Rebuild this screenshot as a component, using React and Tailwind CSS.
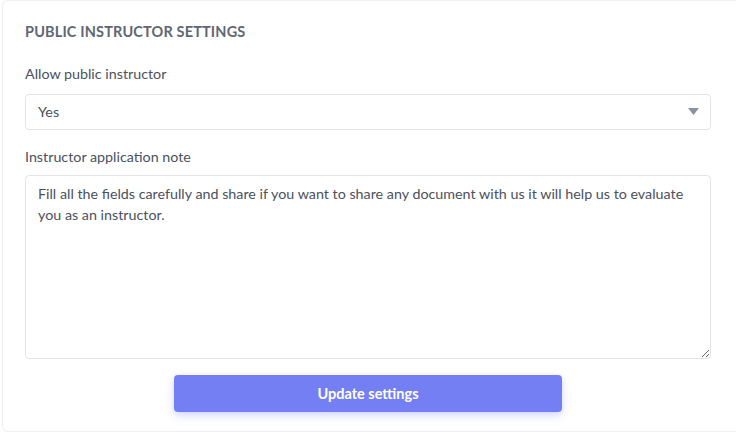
export default function App() {
  return (
    <div
      className="h-[437px] overflow-hidden bg-white pl-[2px] pb-[5px] text-[#4a5160]"
      style={{ fontFamily: 'Lato, "Open Sans", sans-serif' }}
    >
      <div className="h-full rounded-l-md border border-r-0 border-[#efeff1] bg-white pl-[22px] pr-[25px] pt-[22px] pb-6">
        {/* HEADER */}
        <h2 className="text-[14.5px] font-bold tracking-[0.15px] text-[#5f6673] leading-[18px]">
          PUBLIC INSTRUCTOR SETTINGS
        </h2>

        {/* ALLOW PUBLIC INSTRUCTOR */}
        <label className="mt-[24px] block text-[14.3px] leading-[18px] text-[#4a5160]">
          Allow public instructor
        </label>
        <div className="relative mt-[11px]">
          <select className="h-[36px] w-full appearance-none rounded border border-[#e3e4e6] bg-white px-3 text-[14.3px] text-[#4a5160] outline-none">
            <option>Yes</option>
            <option>No</option>
          </select>
          <svg
            className="pointer-events-none absolute right-[12px] top-[14px]"
            width="11"
            height="7"
            viewBox="0 0 11 7"
          >
            <path d="M0 0h11L5.5 7z" fill="#8a94a0" />
          </svg>
        </div>

        {/* APPLICATION NOTE */}
        <label className="mt-[18px] block text-[14.3px] leading-[18px] text-[#4a5160]">
          Instructor application note
        </label>
        <textarea
          className="mt-[9px] block h-[184px] w-full rounded border border-[#e3e4e6] bg-white px-3 py-[7px] text-[14.3px] leading-[21px] text-[#4a5160] outline-none"
          defaultValue="Fill all the fields carefully and share if you want to share any document with us it will help us to evaluate you as an instructor."
        />

        {/* SUBMIT */}
        <div className="mt-[16px] flex justify-center">
          <button className="h-[37px] w-[388px] rounded bg-[#747ff4] text-[14.5px] font-bold text-white shadow-[0_3px_8px_rgba(116,127,244,0.35)]">
            Update settings
          </button>
        </div>
      </div>
    </div>
  )
}
